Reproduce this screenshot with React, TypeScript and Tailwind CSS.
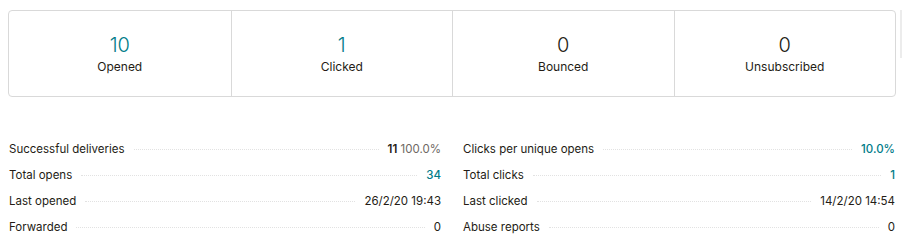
const STATS = [
  { value: "10", label: "Opened", accent: true },
  { value: "1", label: "Clicked", accent: true },
  { value: "0", label: "Bounced", accent: false },
  { value: "0", label: "Unsubscribed", accent: false },
];

type Row = { label: string; value: React.ReactNode };

const LEFT: Row[] = [
  {
    label: "Successful deliveries",
    value: (
      <>
        <span className="font-semibold text-[#241c15]">11</span>{" "}
        <span className="text-[#6e6863]">100.0%</span>
      </>
    ),
  },
  { label: "Total opens", value: <span className="font-medium text-[#007c89]">34</span> },
  { label: "Last opened", value: <span className="text-[#241c15]">26/2/20 19:43</span> },
  { label: "Forwarded", value: <span className="text-[#241c15]">0</span> },
];

const RIGHT: Row[] = [
  { label: "Clicks per unique opens", value: <span className="font-medium text-[#007c89]">10.0%</span> },
  { label: "Total clicks", value: <span className="font-medium text-[#007c89]">1</span> },
  { label: "Last clicked", value: <span className="text-[#241c15]">14/2/20 14:54</span> },
  { label: "Abuse reports", value: <span className="text-[#241c15]">0</span> },
];

function StatList({ rows }: { rows: Row[] }) {
  return (
    <ul className="flex flex-col">
      {rows.map((r) => (
        <li key={r.label} className="flex items-baseline h-[26px] text-[11.5px] leading-[26px]">
          <span className="text-[#241c15] shrink-0">{r.label}</span>
          <span className="flex-1 mx-[9px] border-b border-dotted border-[#e2e2e2] translate-y-[-3px]" />
          <span className="shrink-0">{r.value}</span>
        </li>
      ))}
    </ul>
  );
}

export default function App() {
  return (
    <div
      className="relative w-[902px] h-[244px] bg-white overflow-hidden"
      style={{ fontFamily: "Inter, 'Liberation Sans', sans-serif" }}
    >
      <div className="absolute right-0 top-[10px] w-[2px] h-[48px] bg-[#ececec]" />
      <div className="pt-[10px] pl-[8px] pr-[6px]">
        <div className="grid grid-cols-4 h-[87px] border border-[#d9d9d9] rounded-[4px]">
          {STATS.map((s, i) => (
            <div
              key={s.label}
              className={
                "flex flex-col items-center justify-center pt-[2px] " +
                (i > 0 ? "border-l border-[#d9d9d9]" : "")
              }
            >
              <div
                className={
                  "text-[20px] leading-[24px] font-light " +
                  (s.accent ? "text-[#007c89]" : "text-[#241c15]")
                }
              >
                {s.value}
              </div>
              <div className="text-[12px] leading-[20px] text-[#241c15]">{s.label}</div>
            </div>
          ))}
        </div>
        <div className="grid grid-cols-[432px_432px] gap-[22px] mt-[39px] pl-[1px]">
          <StatList rows={LEFT} />
          <StatList rows={RIGHT} />
        </div>
      </div>
    </div>
  );
}
